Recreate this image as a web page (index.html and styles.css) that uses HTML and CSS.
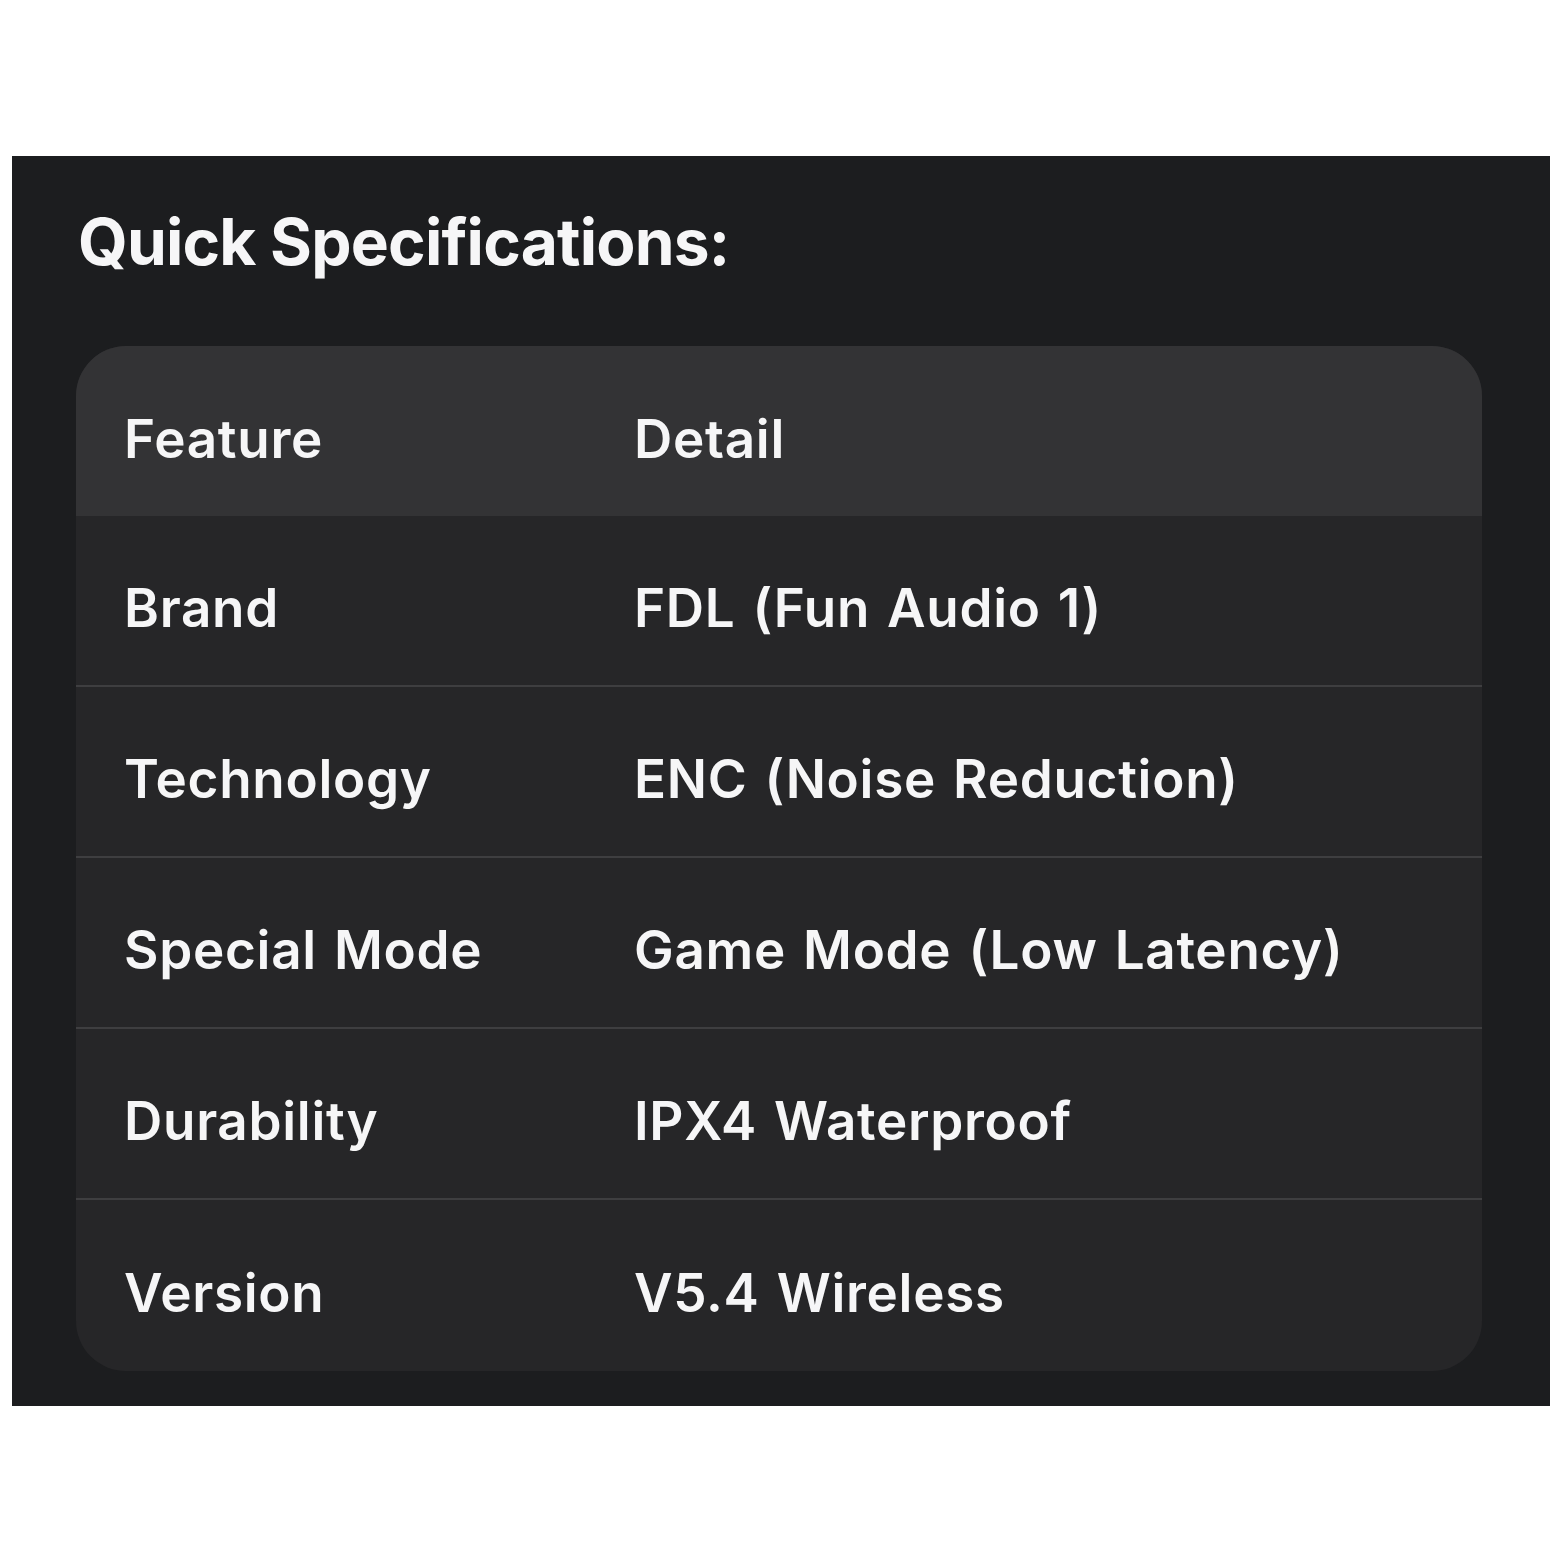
FILE: index.html
```html
<!DOCTYPE html>
<html>
<head>
<meta charset="utf-8">
<link rel="stylesheet" href="styles.css">
</head>
<body>
<div class="panel">
  <h1 class="title">Quick Specifications:</h1>
  <div class="card">
    <div class="row head"><div class="cell">Feature</div><div class="cell">Detail</div></div>
    <div class="row"><div class="cell">Brand</div><div class="cell">FDL (Fun Audio 1)</div></div>
    <div class="row"><div class="cell">Technology</div><div class="cell">ENC (Noise Reduction)</div></div>
    <div class="row"><div class="cell">Special Mode</div><div class="cell">Game Mode (Low Latency)</div></div>
    <div class="row"><div class="cell">Durability</div><div class="cell">IPX4 Waterproof</div></div>
    <div class="row last"><div class="cell">Version</div><div class="cell">V5.4 Wireless</div></div>
  </div>
</div>
</body>
</html>
```
FILE: styles.css
```css
html, body {
  margin: 0;
  padding: 0;
  background: #ffffff;
}
body {
  font-family: Inter, "Noto Sans", sans-serif;
  color: #f6f6f7;
}
.panel {
  margin: 156px 0 0 12px;
  width: 1538px;
  height: 1250px;
  box-sizing: border-box;
  background: #1c1d1f;
  padding: 54px 0 0 64px;
}
.title {
  margin: 0;
  font-size: 64px;
  line-height: 64px;
  font-weight: 700;
  padding-left: 2px;
  letter-spacing: -0.8px;
}
.card {
  margin-top: 72px;
  width: 1406px;
  border-radius: 50px;
  overflow: hidden;
  background: #262628;
}
.row {
  display: grid;
  grid-template-columns: 558px 1fr;
  height: 171px;
  box-sizing: border-box;
  border-bottom: 2px solid #3e3e40;
  align-items: center;
  padding-top: 16px;
}
.row.head {
  background: #333335;
  border-bottom: none;
  height: 170px;
}
.row.last {
  border-bottom: none;
}
.cell {
  font-size: 53px;
  line-height: 53px;
  font-weight: 600;
  letter-spacing: 0.7px;
  word-spacing: 3px;
}
.cell:first-child {
  padding-left: 48px;
}
```
